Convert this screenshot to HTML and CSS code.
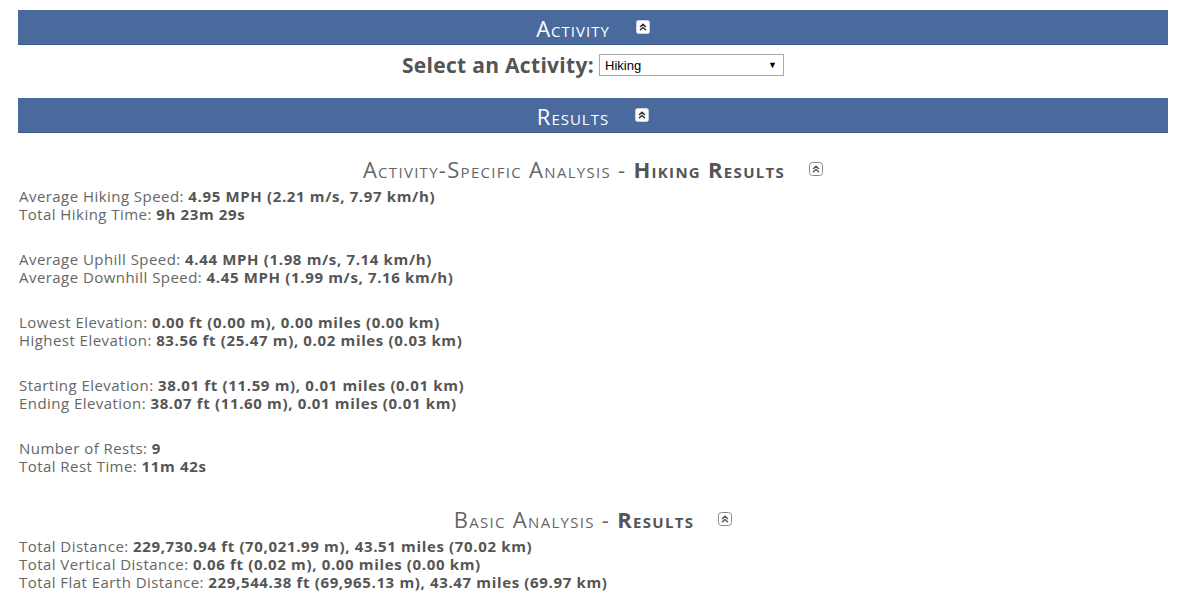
FILE: index.html
```html
<!DOCTYPE html>
<html>
<head>
<meta charset="utf-8">
<link rel="stylesheet" href="styles.css">
</head>
<body>
<div class="page">
  <div class="bar">
    <span class="bar-title">Activity</span>
    <svg class="tog" viewBox="0 0 14 14"><rect x="0.5" y="0.5" width="13" height="13" rx="2" fill="#fff" stroke="#c9d2de"/><path d="M4 7 L7 4.2 L10 7 M4 10.3 L7 7.5 L10 10.3" fill="none" stroke="#333" stroke-width="1.5"/></svg>
  </div>
  <div class="select-row">
    <label class="select-label">Select an Activity:</label>
    <div class="select"><span>Hiking</span><span class="arrow">▼</span></div>
  </div>
  <div class="bar">
    <span class="bar-title">Results</span>
    <svg class="tog" viewBox="0 0 14 14"><rect x="0.5" y="0.5" width="13" height="13" rx="2" fill="#fff" stroke="#c9d2de"/><path d="M4 7 L7 4.2 L10 7 M4 10.3 L7 7.5 L10 10.3" fill="none" stroke="#333" stroke-width="1.5"/></svg>
  </div>

  <div class="sec-head">
    <span class="sec-title">Activity-Specific Analysis - <b>Hiking Results</b></span>
    <svg class="tog2" viewBox="0 0 14 14"><rect x="0.5" y="0.5" width="13" height="13" rx="3" fill="#fff" stroke="#8a8a8a"/><path d="M4 7 L7 4.2 L10 7 M4 10.3 L7 7.5 L10 10.3" fill="none" stroke="#555" stroke-width="1.3"/></svg>
  </div>
  <div class="group first">
    <div>Average Hiking Speed: <b>4.95 MPH (2.21 m/s, 7.97 km/h)</b></div>
    <div>Total Hiking Time: <b>9h 23m 29s</b></div>
  </div>
  <div class="group">
    <div>Average Uphill Speed: <b>4.44 MPH (1.98 m/s, 7.14 km/h)</b></div>
    <div>Average Downhill Speed: <b>4.45 MPH (1.99 m/s, 7.16 km/h)</b></div>
  </div>
  <div class="group">
    <div>Lowest Elevation: <b>0.00 ft (0.00 m), 0.00 miles (0.00 km)</b></div>
    <div>Highest Elevation: <b>83.56 ft (25.47 m), 0.02 miles (0.03 km)</b></div>
  </div>
  <div class="group">
    <div>Starting Elevation: <b>38.01 ft (11.59 m), 0.01 miles (0.01 km)</b></div>
    <div>Ending Elevation: <b>38.07 ft (11.60 m), 0.01 miles (0.01 km)</b></div>
  </div>
  <div class="group">
    <div>Number of Rests: <b>9</b></div>
    <div>Total Rest Time: <b>11m 42s</b></div>
  </div>

  <div class="sec-head second">
    <span class="sec-title">Basic Analysis - <b>Results</b></span>
    <svg class="tog2" viewBox="0 0 14 14"><rect x="0.5" y="0.5" width="13" height="13" rx="3" fill="#fff" stroke="#8a8a8a"/><path d="M4 7 L7 4.2 L10 7 M4 10.3 L7 7.5 L10 10.3" fill="none" stroke="#555" stroke-width="1.3"/></svg>
  </div>
  <div class="group first">
    <div>Total Distance: <b>229,730.94 ft (70,021.99 m), 43.51 miles (70.02 km)</b></div>
    <div>Total Vertical Distance: <b>0.06 ft (0.02 m), 0.00 miles (0.00 km)</b></div>
    <div>Total Flat Earth Distance: <b>229,544.38 ft (69,965.13 m), 43.47 miles (69.97 km)</b></div>
  </div>
</div>
</body>
</html>
```
FILE: styles.css
```css
html, body {
  margin: 0;
  padding: 0;
  background: #fff;
}
body {
  font-family: "Open Sans", "Noto Sans", sans-serif;
  color: #666;
  font-size: 15px;
  letter-spacing: 0.45px;
}
.page {
  padding: 10px 17px 0 18px;
}
.bar {
  height: 35px;
  background: #4a6a9e;
  display: flex;
  align-items: center;
  justify-content: center;
  gap: 26px;
  border-bottom: 1px solid #3f5d8c;
  box-sizing: border-box;
}
.bar-title {
  color: #fff;
  font-variant: small-caps;
  font-size: 22px;
  letter-spacing: 1px;
  line-height: 1;
  padding-top: 1px;
}
.tog {
  width: 14px;
  height: 14px;
}
.select-row {
  height: 53px;
  display: flex;
  justify-content: center;
  align-items: flex-start;
  gap: 5px;
  padding-top: 7px;
  box-sizing: border-box;
}
.select-label {
  font-weight: bold;
  font-size: 21px;
  letter-spacing: 0.3px;
  color: #555;
  line-height: 26px;
}
.select {
  width: 185px;
  height: 22px;
  box-sizing: border-box;
  border: 1px solid #a9a9a9;
  display: flex;
  align-items: center;
  justify-content: space-between;
  padding: 0 6px 0 5px;
  font-family: "Liberation Sans", Arial, sans-serif;
  font-size: 13px;
  letter-spacing: 0;
  color: #000;
  margin-top: 2px;
}
.arrow {
  font-size: 9px;
}
.sec-head {
  display: flex;
  justify-content: center;
  align-items: center;
  gap: 24px;
  margin-top: 24px;
  height: 24px;
}
.sec-head.second {
  margin-top: 32px;
}
.sec-title {
  font-variant: small-caps;
  font-size: 22px;
  letter-spacing: 1.3px;
  color: #666;
  line-height: 24px;
}
.sec-title b {
  color: #555;
}
.tog2 {
  width: 14px;
  height: 14px;
}
.group {
  margin-top: 27px;
  line-height: 18px;
  padding-left: 1px;
}
.group.first {
  margin-top: 6px;
}
.group b {
  color: #555;
  letter-spacing: 0.65px;
}
```
